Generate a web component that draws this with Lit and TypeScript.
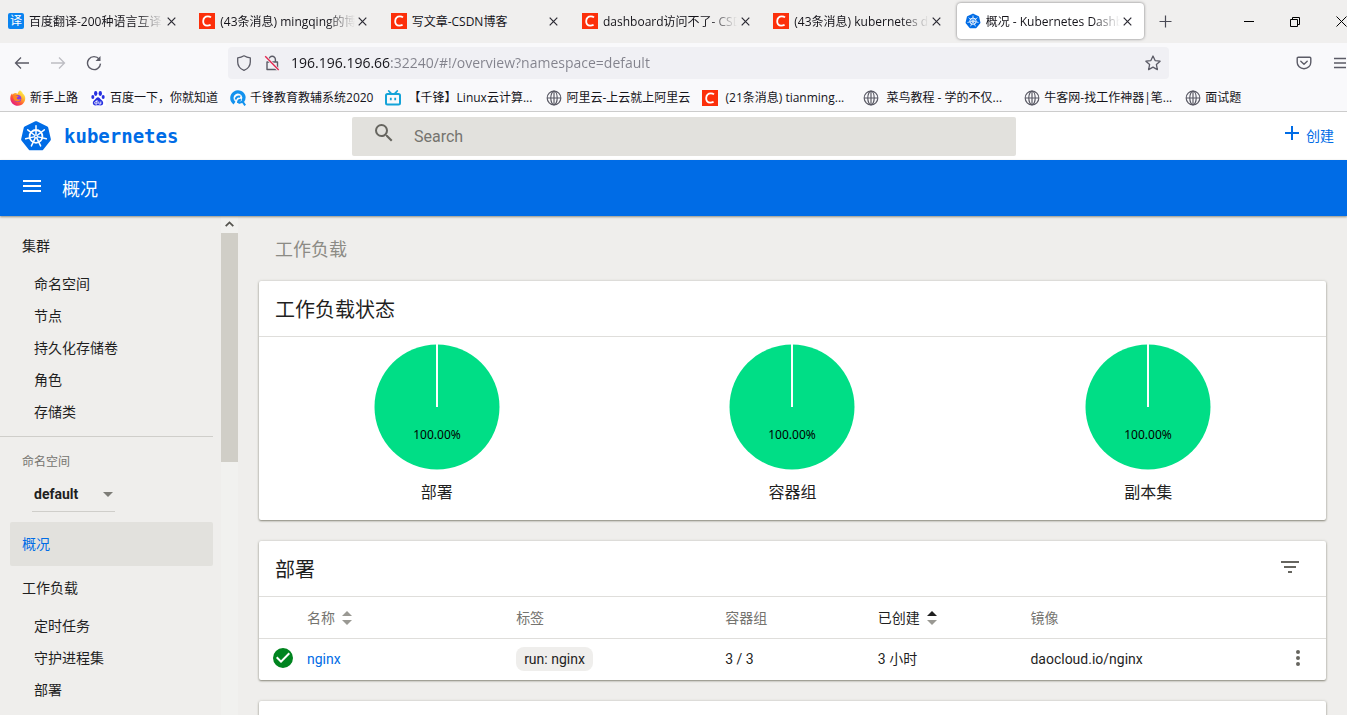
import { LitElement, html, svg, css } from "lit";
import { customElement, state } from "lit/decorators.js";
import { classMap } from "lit/directives/class-map.js";

const point = (cx: number, cy: number, r: number, step: number) => {
  const a = (step * Math.PI * 2) / 7 - Math.PI / 2;
  return [cx + r * Math.cos(a), cy + r * Math.sin(a)];
};

/* The Kubernetes helm: a rounded heptagon with a seven-spoked wheel. */
const helm = (size: number) => {
  const outline = [0, 1, 2, 3, 4, 5, 6].map((i) => point(16, 16.4, 13.6, i).join(",")).join(" ");
  return html`<svg width=${size} height=${size} viewBox="0 0 32 32" aria-hidden="true">
    <polygon points=${outline} fill="#006ce6" stroke="#006ce6" stroke-width="3.2" stroke-linejoin="round" />
    <circle cx="16" cy="16.4" r="6.4" fill="none" stroke="#fff" stroke-width="1.8" />
    ${[0, 1, 2, 3, 4, 5, 6].map((i) => {
      const [x1, y1] = point(16, 16.4, 2.2, i);
      const [x2, y2] = point(16, 16.4, 10.6, i);
      return svg`<line x1=${x1} y1=${y1} x2=${x2} y2=${y2} stroke="#fff" stroke-width="1.5" stroke-linecap="round" />`;
    })}
    <circle cx="16" cy="16.4" r="2" fill="#fff" />
    <circle cx="16" cy="16.4" r="0.8" fill="#006ce6" />
  </svg>`;
};

const csdn = html`<svg width="16" height="16" viewBox="0 0 16 16" aria-hidden="true">
  <rect width="16" height="16" fill="#fc2f0a" />
  <path d="M12 4.4C11.2 3.7 10 3.3 8.9 3.3 6.2 3.3 4.4 5.3 4.2 8c-.2 2.900 1.300 4.700 4 4.700 1.200 0 2.400-.3 3.400-.9" fill="none" stroke="#fff" stroke-width="1.800" />
</svg>`;

const globe = html`<svg width="16" height="16" viewBox="0 0 16 16" fill="none" stroke="#5b5b66" stroke-width="1.200" aria-hidden="true">
  <circle cx="8" cy="8" r="6.800" />
  <ellipse cx="8" cy="8" rx="3.200" ry="6.800" />
  <path d="M1.200 8H14.800M8 1.200V14.800" />
</svg>`;

const firefox = html`<svg width="16" height="16" viewBox="0 0 16 16" aria-hidden="true">
  <defs>
    <linearGradient id="fx" x1="0.850" y1="0.100" x2="0.200" y2="0.950">
      <stop offset="0" stop-color="#fff44f" /><stop offset="0.350" stop-color="#ffb02e" />
      <stop offset="0.650" stop-color="#ff5a36" /><stop offset="1" stop-color="#e31587" />
    </linearGradient>
  </defs>
  <path d="M10 .2c1.800 1.200 2.500 2.300 2.900 3.500.8.3 1.900 1.700 2.200 3.300.9 4.700-2.500 8.700-7.100 8.700C3.700 15.700.4 12.500.3 8.400.3 6 1.100 4.300 2.100 3.200l.4 1.500C3.300 3.700 4.300 3.100 5.200 3c.8 0 1.800.2 2.600.7C8 2.300 8.700 1 10 .2z" fill="url(#fx)" />
  <circle cx="7.800" cy="8.600" r="3.500" fill="#8a3be0" />
  <path d="M3.300 5.400C4.600 4.700 5.900 4.900 6.800 5.800l1.800.3c-.1.900-1.100 1.100-1.700 1.500-.4.900.2 1.700 1.200 1.800 1.200.1 1.800-.5 2.700-.3-.7 2.100-3.200 2.900-5.100 1.900C3.700 10 3 7.700 3.300 5.400z" fill="#ff8a1f" />
</svg>`;

const baidu = html`<svg width="16" height="16" viewBox="0 0 16 16" fill="#2932e1" aria-hidden="true">
  <rect width="16" height="16" fill="#fff" />
  <ellipse cx="5.700" cy="3.500" rx="1.700" ry="2.400" />
  <ellipse cx="10.300" cy="3.500" rx="1.700" ry="2.400" />
  <ellipse cx="2.800" cy="7" rx="1.500" ry="2" />
  <ellipse cx="13.200" cy="7" rx="1.500" ry="2" />
  <path d="M8 7.200c1.300 0 1.900 1.200 2.900 2.200 1.200 1.100 2.300 1.900 2.300 3.500 0 1.700-1.200 2.500-2.700 2.500-.9 0-1.600-.2-2.500-.2s-1.600.2-2.500.2c-1.600 0-2.700-.9-2.700-2.600 0-1.500 1.200-2.300 2.200-3.400 1-1 1.700-2.200 3-2.200z" />
  <path d="M7 10v4H5.800c-1.500 0-1.500-2.400 0-2.400H7M8.800 11.500v2c0 .4.200.5.5.5h1.500v-2.500" fill="none" stroke="#fff" stroke-width="0.900" />
</svg>`;

const qianfeng = html`<svg width="16" height="16" viewBox="0 0 16 16" fill="none" aria-hidden="true">
  <path d="M4.500 13.100A6.100 6.100 0 1 1 14 7.300c0 1.600-.5 2.900-1.400 4" stroke="#1292ee" stroke-width="3.300" />
  <path d="M5.700 9.500c.1-2.400 2.300-3.600 4.500-2.700M8 12.900c0-2 1-3.100 2.900-3.100M8.400 13l4.200-1.300 2.600 3.700" stroke="#1292ee" stroke-width="2" />
</svg>`;

const bili = html`<svg width="16" height="16" viewBox="0 0 16 16" fill="none" stroke="#13a3d8" aria-hidden="true">
  <rect x="1" y="4" width="14" height="10.500" rx="1.500" stroke-width="2" />
  <path d="M3.800 1 6 3.400M12.200 1 10 3.400" stroke-width="1.800" stroke-linecap="round" />
  <path d="M5.800 7.800v2.400M10.200 7.800v2.400" stroke-width="1.800" />
</svg>`;

const translate = html`<span class="yi" aria-hidden="true">译</span>`;

const cross = html`<svg width="9" height="9" viewBox="0 0 9 9" aria-hidden="true">
  <path d="M.7.7l7.600 7.600M8.300.7.7 8.300" stroke="#2b2a33" stroke-width="1.200" />
</svg>`;

@customElement("browser-chrome")
class BrowserChrome extends LitElement {
  static styles = css`
    :host {
      display: block;
      background: #f9f9fb;
      border-bottom: 1px solid #cccccc;
      color: #15141a;
      font: 12px/16px "Open Sans", "Noto Sans CJK SC", sans-serif;
    }
    button {
      display: inline-flex;
      align-items: center;
      justify-content: center;
      flex: none;
      padding: 0;
      border: 0;
      background: none;
      color: inherit;
      font: inherit;
    }
    svg { display: block; flex: none; }
    .strip { display: flex; height: 43px; background: #f0efee; overflow: hidden; }
    .tabs {
      flex: 1;
      min-width: 0;
      display: grid;
      grid-template-columns: repeat(6, minmax(0, 1fr));
      gap: 4px;
      padding: 3px 0 4px;
    }
    .tab {
      display: flex;
      align-items: center;
      padding: 0 8px;
      border-radius: 4px;
    }
    .tab.active { background: #fff; box-shadow: 0 0 3px rgba(0, 0, 0, 0.5); }
    .name {
      flex: 1;
      min-width: 0;
      margin-left: 5px;
      padding-top: 2px;
      overflow: hidden;
      white-space: nowrap;
    }
    .name.long { mask-image: linear-gradient(to left, transparent, #000 28px); }
    .close { width: 16px; height: 20px; }
    .yi {
      width: 16px;
      height: 16px;
      flex: none;
      border-radius: 2px;
      background: #0a84f0;
      color: #fff;
      text-align: center;
    }
    .controls { display: flex; flex: none; width: 203px; }
    .add { width: 32px; margin: 0 45px 0 5px; }
    .win { width: 46px; }
    .nav { display: flex; align-items: center; padding: 4px 0 4px 6px; height: 32px; overflow: hidden; }
    .nav > button { width: 32px; height: 32px; margin-right: 4px; }
    .nav > button:last-child { margin-right: -9px; }
    .url {
      flex: 1;
      display: flex;
      align-items: center;
      height: 32px;
      margin: 0 119px 0 114px;
      padding: 0 8px;
      border-radius: 4px;
      background: #f0f0f4;
    }
    .url .lock { margin: 0 11px 0 12px; }
    .url input {
      flex: 1;
      min-width: 0;
      padding: 0;
      border: 0;
      outline: 0;
      font: 14px/20px "Open Sans", sans-serif;
      color: transparent;
      background: linear-gradient(to right, #15141a 99px, #82828c 99px);
      -webkit-background-clip: text;
      background-clip: text;
    }
    .marks { display: flex; gap: 12px; padding: 7px 10px 5px; height: 16px; overflow: hidden; }
    .mark {
      display: flex;
      flex: none;
      gap: 4px;
      color: inherit;
      text-decoration: none;
      white-space: pre;
    }
    .mark.full { width: 149px; }
  `;

  private tabs = [
    { icon: translate, name: "百度翻译-200种语言互译", long: true },
    { icon: csdn, name: "(43条消息) mingqing的博客", long: true },
    { icon: csdn, name: "写文章-CSDN博客", long: false },
    { icon: csdn, name: "dashboard访问不了- CSDN", long: true },
    { icon: csdn, name: "(43条消息) kubernetes da", long: true },
    { icon: helm(16), name: "概况 - Kubernetes Dashboard", long: true, active: true },
  ];

  private marks = [
    { icon: firefox, name: "新手上路" },
    { icon: baidu, name: "百度一下，你就知道" },
    { icon: qianfeng, name: "千锋教育教辅系统2020" },
    { icon: bili, name: " 【千锋】Linux云计算...", full: true },
    { icon: globe, name: "阿里云-上云就上阿里云" },
    { icon: csdn, name: " (21条消息) tianming...", full: true },
    { icon: globe, name: " 菜鸟教程 - 学的不仅...", full: true },
    { icon: globe, name: "牛客网-找工作神器|笔...", full: true },
    { icon: globe, name: "面试题" },
  ];

  render() {
    return html`
      <div class="strip">
        <div class="tabs">
          ${this.tabs.map(
            (t) => html`<div class=${classMap({ tab: true, active: !!t.active })}>
              ${t.icon}<span class=${classMap({ name: true, long: t.long })}>${t.name}</span>
              <button class="close" aria-label="关闭标签页">${cross}</button>
            </div>`
          )}
        </div>
        <div class="controls">
          <button class="add" aria-label="新标签页">
            <svg width="13" height="13" viewBox="0 0 13 13"><path d="M6.500.5v12M.5 6.500h12" stroke="#4a4a55" stroke-width="1.200" /></svg>
          </button>
          <button class="win" aria-label="最小化">
            <svg width="10" height="10" viewBox="0 0 10 10"><path d="M0 4.500h10" stroke="#000" /></svg>
          </button>
          <button class="win" aria-label="还原">
            <svg width="10" height="10" viewBox="0 0 10 10" fill="none" stroke="#000"><path d="M.5 2.500h7v7h-7zM2.500 2.500v-2h7v7h-2" /></svg>
          </button>
          <button class="win" aria-label="关闭">
            <svg width="11" height="11" viewBox="0 0 11 11"><path d="M.5.5l10 10M10.500.5l-10 10" stroke="#000" /></svg>
          </button>
        </div>
      </div>
      <div class="nav">
        <button aria-label="后退">
          <svg width="16" height="16" viewBox="0 0 16 16" fill="none" stroke="#5b5b66" stroke-width="1.300"><path d="M1.500 8H15M7 2.500 1.500 8 7 13.500" /></svg>
        </button>
        <button aria-label="前进">
          <svg width="16" height="16" viewBox="0 0 16 16" fill="none" stroke="#bdbdc2" stroke-width="1.300"><path d="M14.500 8H1M9 2.500 14.500 8 9 13.500" /></svg>
        </button>
        <button aria-label="重新载入">
          <svg width="16" height="16" viewBox="0 0 16 16" fill="none" stroke="#5b5b66" stroke-width="1.400"><path d="M13.200 4.200A6.500 6.500 0 1 0 14.500 8.600" /><path d="M14.500 1v5h-5z" fill="#5b5b66" stroke="none" /></svg>
        </button>
        <div class="url">
          <svg width="16" height="16" viewBox="0 0 16 16" fill="none" stroke="#5b5b66" stroke-width="1.300"><path d="M8 .8C6 2 4 2.600 1.700 2.900v4C1.700 11 4.200 13.700 8 15.300c3.800-1.600 6.300-4.300 6.300-8.400v-4C12 2.600 10 2 8 .8z" stroke-linejoin="round" /></svg>
          <svg class="lock" width="16" height="16" viewBox="0 0 16 16" fill="none" stroke-width="1.400"><path d="M5 7V4.500a3.200 3.200 0 0 1 6.400 0V7M3 7h10.500v7.500H3z" stroke="#5b5b66" stroke-linejoin="round" /><path d="M1.500 1.500l13 13.500" stroke="#f0f0f4" stroke-width="3" /><path d="M1.200 1.200l13.500 13.800" stroke="#e22850" /></svg>
          <input aria-label="地址" .value=${"196.196.196.66:32240/#!/overview?namespace=default"} spellcheck="false" />
          <button aria-label="为此页添加书签">
            <svg width="16" height="16" viewBox="0 0 16 16" fill="none" stroke="#5b5b66" stroke-width="1.300" stroke-linejoin="round"><path d="M8 1l2.100 4.600 5 .6-3.700 3.400 1 5L8 12.100l-4.400 2.500 1-5L.9 6.200l5-.6z" /></svg>
          </button>
        </div>
        <button aria-label="保存到 Pocket">
          <svg width="16" height="16" viewBox="0 0 16 16" fill="none" stroke="#5b5b66" stroke-width="1.400" stroke-linecap="round" stroke-linejoin="round"><path d="M2.200 2.200h11.600a1 1 0 0 1 1 1v4A6.800 6.500 0 0 1 8 13.800 6.800 6.500 0 0 1 1.200 7.200v-4a1 1 0 0 1 1-1z" /><path d="M4.800 6.200 8 9.200l3.200-3" /></svg>
        </button>
        <button aria-label="打开应用程序菜单">
          <svg width="16" height="16" viewBox="0 0 16 16"><path d="M2 3.500h12M2 8h12M2 12.500h12" stroke="#5b5b66" stroke-width="1.300" /></svg>
        </button>
      </div>
      <nav class="marks">
        ${this.marks.map(
          (m) => html`<a href="#" class=${classMap({ mark: true, full: !!m.full })}>${m.icon}<span>${m.name}</span></a>`
        )}
      </nav>
    `;
  }
}

@customElement("kube-dashboard")
class KubeDashboard extends LitElement {
  static styles = css`
    :host {
      display: flex;
      flex-direction: column;
      min-height: 0;
      background: #efeeec;
      color: #1f1f1f;
      font: 14px/20px Roboto, "Noto Sans CJK SC", sans-serif;
    }
    svg { display: block; flex: none; }
    button { padding: 0; border: 0; background: none; color: inherit; font: inherit; }
    a { color: inherit; text-decoration: none; }
    h1, h2, h3 { margin: 0; font-weight: 400; }

    .top {
      display: grid;
      grid-template-columns: 352px 1fr 331px;
      align-items: center;
      height: 48px;
      background: #fff;
    }
    .brand {
      display: flex;
      align-items: center;
      gap: 12px;
      padding-left: 20px;
      color: #006ce6;
      font: bold 19px/24px "DejaVu Sans Mono", monospace;
    }
    .search {
      display: flex;
      align-items: center;
      height: 39px;
      padding-left: 20px;
      border-radius: 2px;
      background: #e2e1dd;
    }
    .search svg { margin-bottom: 6px; }
    .search input {
      flex: 1;
      min-width: 0;
      padding: 2px 18px 0;
      border: 0;
      outline: 0;
      background: none;
      font: 16px/24px Roboto, sans-serif;
    }
    .search input::placeholder { color: #75746f; }
    .create {
      justify-self: end;
      display: flex;
      align-items: center;
      gap: 2px;
      margin-right: 13px;
      color: #006ce6;
    }
    .create svg { margin-bottom: 6px; }

    .bar {
      display: flex;
      align-items: center;
      gap: 18px;
      flex: none;
      height: 56px;
      padding-left: 20px;
      background: #006ce6;
      color: #fff;
      box-shadow: 0 1px 2px rgba(80, 78, 60, 0.6);
      z-index: 1;
    }
    .bar button svg { margin-bottom: 4px; }
    .bar h1 { font-size: 18px; line-height: 24px; padding-top: 4px; }

    .body { flex: 1; min-height: 0; display: flex; }
    .side { flex: none; display: flex; width: 238px; overflow: hidden; }
    .menu { flex: 1; padding: 8px 8px 0 0; }
    .menu a { display: block; }
    .head {
      margin-left: 10px;
      padding-left: 12px;
      border-radius: 2px;
      line-height: 44px;
    }
    .head.active { background: #e2e1dd; color: #006ce6; }
    .sub { padding-left: 34px; line-height: 32px; }
    .space { margin: 8px 0 10px; padding: 15px 0 0 22px; border-top: 1px solid #cfceca; }
    .space label { display: block; padding-bottom: 5px; color: #75746f; font-size: 12px; }
    .pick {
      display: inline-flex;
      align-items: center;
      width: 83px;
      height: 34px;
      margin-left: 10px;
      border-bottom: 1px solid #cfceca;
    }
    .pick select {
      flex: 1;
      min-width: 0;
      padding: 0 0 0 2px;
      border: 0;
      background: none;
      color: #1f1f1f;
      font: bold 14px/20px Roboto, sans-serif;
      appearance: none;
      -webkit-appearance: none;
    }
    .pick svg { margin-right: 2px; }
    .scroll { width: 17px; background: #f1f1ef; }
    .scroll svg { margin: 5px 4px 6px; }
    .thumb { height: 229px; background: #d0cec7; }

    .main { flex: 1; min-width: 0; padding: 21px 21px 0; overflow: hidden; }
    .group { padding: 0 16px 18px; color: #8c8b85; font-size: 18px; line-height: 26px; }
    .card {
      margin-bottom: 21px;
      background: #fff;
      border-radius: 2px;
      box-shadow: 0 1px 2px rgba(80, 78, 60, 0.6), 0 0 3px rgba(80, 78, 60, 0.2);
    }
    .title {
      display: flex;
      align-items: center;
      justify-content: space-between;
      height: 55px;
      padding: 0 26px 0 16px;
      border-bottom: 1px solid #dfdedb;
    }
    .title h3 { padding-top: 2px; font-size: 20px; line-height: 28px; }
    .title button svg { margin-bottom: 4px; }
    .pies { display: grid; grid-template-columns: repeat(3, 1fr); padding: 7px 0 15px; }
    figure { margin: 0; display: flex; flex-direction: column; align-items: center; }
    figcaption { padding-top: 11px; font-size: 16px; line-height: 24px; }
    .pct { font: 12px "Noto Sans", sans-serif; fill: #000; }

    table { width: 100%; border-collapse: collapse; table-layout: fixed; }
    th, td { height: 41px; padding: 0; text-align: left; font-weight: 400; }
    th { color: #75746f; border-bottom: 1px solid #dfdedb; }
    td { height: 39px; padding-bottom: 2px; }
    th.sorted { color: #1f1f1f; }
    th button { display: flex; align-items: center; gap: 7px; }
    .c-icon { width: 48px; }
    .c-wide { width: 19.6%; }
    .c-mid { width: 14.3%; }
    .c-menu { width: 56px; }
    td.ok, td.more { height: 37px; padding-bottom: 4px; }
    .ok { padding-left: 14px; }
    .link { color: #006ce6; }
    .chip {
      display: inline-block;
      padding: 2px 8px;
      border-radius: 8px;
      background: #efeeec;
    }
    .more button { display: block; margin-left: 16px; }
    .next { height: 60px; margin: 0; }
  `;

  @state() private page = "概况";

  private head(name: string) {
    return html`<a href="#" class=${classMap({ head: true, active: this.page === name })}>${name}</a>`;
  }

  private subs(names: string[]) {
    return names.map((n) => html`<a href="#" class="sub">${n}</a>`);
  }

  private pie(name: string) {
    return html`<figure>
      <svg width="126" height="126" viewBox="0 0 126 126" role="img" aria-label=${name}>
        <circle cx="63" cy="63" r="62.500" fill="#00de86" />
        <path d="M63 0v63" stroke="#fff" stroke-width="2" />
        <text class="pct" x="63" y="95" text-anchor="middle">100.00%</text>
      </svg>
      <figcaption>${name}</figcaption>
    </figure>`;
  }

  private sort(active = false) {
    return html`<svg width="10" height="14" viewBox="0 0 10 14" aria-hidden="true">
      <path d="M5 0l5 5H0z" fill=${active ? "#1f1f1f" : "#9a9993"} /><path d="M5 14l5-5H0z" fill="#9a9993" />
    </svg>`;
  }

  render() {
    return html`
      <header class="top">
        <a class="brand" href="#">${helm(32)}<span>kubernetes</span></a>
        <div class="search">
          <svg width="24" height="24" viewBox="0 0 24 24" fill="#66655f"><path d="M15.500 14h-.79l-.28-.27A6.470 6.470 0 0 0 16 9.500 6.500 6.500 0 1 0 9.500 16c1.610 0 3.090-.59 4.230-1.570l.27.28v.79l5 4.990L20.490 19l-4.990-5zm-6 0C7.010 14 5 11.990 5 9.500S7.010 5 9.500 5 14 7.010 14 9.500 11.990 14 9.500 14z" /></svg>
          <input type="text" placeholder="Search" aria-label="Search" />
        </div>
        <button class="create">
          <svg width="24" height="24" viewBox="0 0 24 24" fill="#006ce6"><path d="M19 13h-6v6h-2v-6H5v-2h6V5h2v6h6v2z" /></svg>
          <span>创建</span>
        </button>
      </header>
      <div class="bar">
        <button aria-label="菜单">
          <svg width="24" height="24" viewBox="0 0 24 24" fill="#fff"><path d="M3 18h18v-2H3v2zm0-5h18v-2H3v2zm0-7v2h18V6H3z" /></svg>
        </button>
        <h1>概况</h1>
      </div>
      <div class="body">
        <aside class="side">
          <nav class="menu">
            ${this.head("集群")} ${this.subs(["命名空间", "节点", "持久化存储卷", "角色", "存储类"])}
            <div class="space">
              <label for="ns">命名空间</label>
              <div class="pick">
                <select id="ns"><option>default</option></select>
                <svg width="10" height="5" viewBox="0 0 10 5" aria-hidden="true"><path d="M0 0h10L5 5z" fill="#7d7c77" /></svg>
              </div>
            </div>
            ${this.head("概况")} ${this.head("工作负载")} ${this.subs(["定时任务", "守护进程集", "部署"])}
          </nav>
          <div class="scroll">
            <svg width="9" height="6" viewBox="0 0 9 6" aria-hidden="true"><path d="M.7 5.200 4.500 1.400l3.800 3.800" fill="none" stroke="#55544f" stroke-width="1.800" /></svg>
            <div class="thumb"></div>
          </div>
        </aside>
        <main class="main">
          <h2 class="group">工作负载</h2>
          <section class="card">
            <div class="title"><h3>工作负载状态</h3></div>
            <div class="pies">${["部署", "容器组", "副本集"].map((n) => this.pie(n))}</div>
          </section>
          <section class="card">
            <div class="title">
              <h3>部署</h3>
              <button aria-label="筛选">
                <svg width="20" height="20" viewBox="2 2 20 20" fill="#66655f"><path d="M10 18h4v-2h-4v2zM3 6v2h18V6H3zm3 7h12v-2H6v2z" /></svg>
              </button>
            </div>
            <table>
              <thead>
                <tr>
                  <th class="c-icon"></th>
                  <th class="c-wide"><button>名称 ${this.sort()}</button></th>
                  <th class="c-wide">标签</th>
                  <th class="c-mid">容器组</th>
                  <th class="c-mid sorted"><button>已创建 ${this.sort(true)}</button></th>
                  <th>镜像</th>
                  <th class="c-menu"></th>
                </tr>
              </thead>
              <tbody>
                <tr>
                  <td class="ok">
                    <svg width="20" height="20" viewBox="2 2 20 20" fill="#00841f"><path d="M12 2a10 10 0 1 0 0 20 10 10 0 0 0 0-20zm-2 15l-5-5 1.410-1.410L10 14.170l7.590-7.590L19 8l-9 9z" /></svg>
                  </td>
                  <td><a class="link" href="#">nginx</a></td>
                  <td><span class="chip">run: nginx</span></td>
                  <td>3 / 3</td>
                  <td>3 小时</td>
                  <td>daocloud.io/nginx</td>
                  <td class="more">
                    <button aria-label="操作">
                      <svg width="24" height="24" viewBox="0 0 24 24" fill="#66655f"><path d="M12 8a2 2 0 1 0 0-4 2 2 0 0 0 0 4zm0 2a2 2 0 1 0 0 4 2 2 0 0 0 0-4zm0 6a2 2 0 1 0 0 4 2 2 0 0 0 0-4z" /></svg>
                    </button>
                  </td>
                </tr>
              </tbody>
            </table>
          </section>
          <section class="card next"></section>
        </main>
      </div>
    `;
  }
}

@customElement("app-root")
class AppRoot extends LitElement {
  static styles = css`
    :host { display: flex; flex-direction: column; height: 100vh; overflow: hidden; }
    browser-chrome { flex: none; }
    kube-dashboard { flex: 1; }
  `;

  render() {
    return html`<browser-chrome></browser-chrome><kube-dashboard></kube-dashboard>`;
  }
}
